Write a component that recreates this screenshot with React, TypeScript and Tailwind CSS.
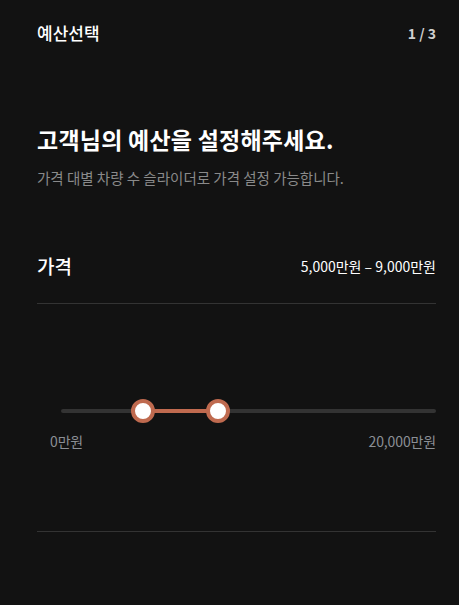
import React from "react";

const MIN = 0;
const MAX = 20000;
const low = 5000;
const high = 9000;

const formatWon = (v: number) => `${v.toLocaleString("en-US")}만원`;

const pct = (v: number) => ((v - MIN) / (MAX - MIN)) * 100;

const Thumb: React.FC<{ value: number }> = ({ value }) => (
  <div
    className="absolute top-1/2 -translate-y-1/2 w-6 h-6 rounded-full bg-white border-[4px] border-[#bf6a4f]"
    style={{ left: `calc(${pct(value)}% - 24px)` }}
  />
);

export default function App() {
  return (
    <div className="min-h-screen bg-[#121212] pl-[37px] pr-[23px] font-['Noto_Sans_CJK_KR','Noto_Sans',sans-serif] text-white">
      <header className="h-[66px] flex items-center justify-between">
        <h1 className="text-[17px] font-medium">예산선택</h1>
        <span className="text-[14px] font-bold text-[#cfcfcf]">1 / 3</span>
      </header>

      <h2 className="mt-[57px] text-[23px] leading-[32px] font-bold tracking-[0.01em]">
        고객님의 예산을 설정해주세요.
      </h2>
      <p className="mt-[13px] text-[14.5px] leading-[20px] text-[#8a8a8a]">
        가격 대별 차량 수 슬라이더로 가격 설정 가능합니다.
      </p>

      <div className="mt-[64px] h-[28px] flex items-center justify-between">
        <span className="text-[19px] font-medium">가격</span>
        <span className="text-[14px]">
          {formatWon(low)} – {formatWon(high)}
        </span>
      </div>
      <div className="mt-[23px] border-t border-[#333333]" />

      <div className="mt-[105px]">
        <div className="ml-[24px] relative h-1 rounded-full bg-[#333333]">
          <div
            className="absolute top-0 h-1 bg-[#c06a4f]"
            style={{
              left: `calc(${pct(low)}% - 12px)`,
              width: `${pct(high) - pct(low)}%`,
            }}
          />
          <Thumb value={low} />
          <Thumb value={high} />
        </div>
        <div className="mt-[18px] pl-[13px] flex justify-between text-[14px] leading-[20px] text-[#8b8f95] tracking-[-0.01em]">
          <span>{formatWon(MIN)}</span>
          <span>{formatWon(MAX)}</span>
        </div>
      </div>

      <div className="mt-[80px] border-t border-[#333333]" />
    </div>
  );
}
